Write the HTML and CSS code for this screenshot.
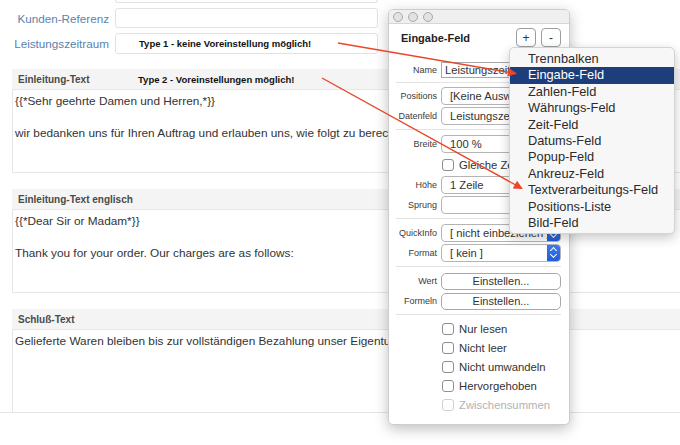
FILE: index.html
```html
<!DOCTYPE html>
<html lang="de">

<head>
  <meta charset="UTF-8">
  <title>Eingabe-Feld</title>
  <link rel="stylesheet" href="styles.css">
</head>

<body>
  <div class="page">
    <div class="form-top">
      <span></span>
      <div class="field stub"></div>
      <label>Kunden-Referenz</label>
      <div class="field"></div>
      <label>Leistungszeitraum</label>
      <div class="field"><b class="note">Type 1 - keine Voreinstellung möglich!</b></div>
    </div>

    <div class="section">
      <div class="sec-head"><span class="sec-title">Einleitung-Text</span><b class="note">Type 2 - Voreinstellungen möglich!</b></div>
      <div class="sec-body">
        <p>{{*Sehr geehrte Damen und Herren,*}}</p>
        <p>&nbsp;</p>
        <p>wir bedanken uns für Ihren Auftrag und erlauben uns, wie folgt zu berechnen:</p>
      </div>
    </div>

    <div class="section">
      <div class="sec-head"><span class="sec-title">Einleitung-Text englisch</span></div>
      <div class="sec-body">
        <p>{{*Dear Sir or Madam*}}</p>
        <p>&nbsp;</p>
        <p>Thank you for your order. Our charges are as follows:</p>
      </div>
    </div>

    <div class="section last">
      <div class="sec-head"><span class="sec-title">Schluß-Text</span></div>
      <div class="sec-body">
        <p>Gelieferte Waren bleiben bis zur vollständigen Bezahlung unser Eigentum.</p>
      </div>
    </div>

    <div class="page-foot"></div>

    <!-- floating inspector window -->
    <div class="win">
      <div class="win-bar"><i></i><i></i><i></i></div>
      <div class="win-head">
        <b>Eingabe-Feld</b>
        <span class="pm"><button>+</button><button>-</button></span>
      </div>

      <div class="prop name-row"><label>Name</label><div class="inp sq">Leistungszeitraum</div></div>
      <hr class="sep first">
      <div class="prop"><label>Positions</label><div class="inp">[Keine Auswahl]</div></div>
      <div class="prop"><label>Datenfeld</label><div class="inp">Leistungszeitraum</div></div>
      <hr class="sep">
      <div class="prop"><label>Breite</label><div class="inp">100 %</div></div>
      <div class="prop check tall"><span class="box"></span>Gleiche Zeilenhöhe</div>
      <div class="prop"><label>Höhe</label><div class="inp">1 Zeile</div></div>
      <div class="prop"><label>Sprung</label><div class="inp"></div></div>
      <hr class="sep">
      <div class="prop"><label>QuickInfo</label><div class="inp pop">[ nicht einbeziehen ]<span class="step"></span></div></div>
      <div class="prop"><label>Format</label><div class="inp pop">[ kein ]<span class="step"></span></div></div>
      <hr class="sep">
      <div class="prop"><label>Wert</label><button class="btn">Einstellen...</button></div>
      <div class="prop"><label>Formeln</label><button class="btn">Einstellen...</button></div>
      <hr class="sep">
      <div class="prop check"><span class="box"></span>Nur lesen</div>
      <div class="prop check"><span class="box"></span>Nicht leer</div>
      <div class="prop check"><span class="box"></span>Nicht umwandeln</div>
      <div class="prop check"><span class="box"></span>Hervorgehoben</div>
      <div class="prop check off"><span class="box"></span>Zwischensummen</div>
    </div>

    <ul class="menu">
      <li>Trennbalken</li>
      <li class="sel">Eingabe-Feld</li>
      <li>Zahlen-Feld</li>
      <li>Währungs-Feld</li>
      <li>Zeit-Feld</li>
      <li>Datums-Feld</li>
      <li>Popup-Feld</li>
      <li>Ankreuz-Feld</li>
      <li>Textverarbeitungs-Feld</li>
      <li>Positions-Liste</li>
      <li>Bild-Feld</li>
    </ul>

    <svg class="arrows" viewBox="0 0 680 445" width="680" height="445">
      <defs>
        <marker id="head" viewBox="0 0 10 10" refX="9" refY="5" markerWidth="11" markerHeight="9" markerUnits="userSpaceOnUse" orient="auto">
          <path d="M0 0L10 5L0 10z" fill="#e8472b" />
        </marker>
      </defs>
      <line x1="338" y1="43" x2="516" y2="73.5" marker-end="url(#head)" />
      <line x1="322" y1="78" x2="522" y2="188.5" marker-end="url(#head)" />
    </svg>
  </div>
</body>

</html>
```

FILE: styles.css
```css
html {
  font-family: "Liberation Sans", Arial, sans-serif;
}

body {
  margin: 0;
  background-color: #fff;
  color: #333;
}

.page {
  position: relative;
  width: 680px;
  height: 445px;
  overflow: hidden;
}

/* top form rows */
.form-top {
  display: grid;
  grid-template-columns: 109px 263px;
  grid-template-rows: 3px 20px 21px;
  column-gap: 6px;
  row-gap: 5px;
  align-items: center;
}

.form-top label {
  text-align: right;
  font-size: 11.7px;
  color: #5a83ae;
}

.field {
  box-sizing: border-box;
  height: 100%;
  border: 1px solid #e2e2e2;
  border-radius: 3px;
  display: flex;
  align-items: center;
}

.field.stub {
  border-top: 0;
  border-radius: 0 0 3px 3px;
}

.note {
  font-size: 9.5px;
  color: #111;
}

.field .note {
  padding-left: 23px;
}

/* text sections */
.section {
  margin: 15px -6px 0 12px;
}

.section + .section {
  margin-top: 16px;
}

.sec-head {
  display: flex;
  align-items: center;
  height: 20px;
  padding-left: 6px;
  background-color: #f3f4f3;
}

.sec-title {
  width: 120px;
  font-size: 10px;
  font-weight: bold;
  color: #4a4a4a;
  white-space: nowrap;
}

.sec-body {
  box-sizing: border-box;
  height: 84px;
  border: 1px solid #e6e6e6;
  padding: 3px 2px;
  font-size: 11.8px;
  line-height: 16px;
  color: #333;
  white-space: nowrap;
}

.sec-body p {
  margin: 0;
}

.last .sec-body {
  height: 83px;
  border-bottom: 0;
}

.page-foot {
  border-top: 1px solid #e4e4e4;
}

/* inspector window */
.win {
  position: absolute;
  left: 388px;
  top: 9px;
  z-index: 2;
  box-sizing: border-box;
  width: 182px;
  height: 416px;
  background-color: #fff;
  border: 1px solid #cdcdcd;
  border-radius: 5px;
  box-shadow: 0 4px 14px rgba(0, 0, 0, 0.25);
  overflow: hidden;
}

.win-bar {
  display: flex;
  gap: 5px;
  align-items: center;
  height: 13px;
  padding-left: 4px;
  background-color: #efefef;
  border-bottom: 1px solid #d6d6d6;
}

.win-bar i {
  box-sizing: border-box;
  width: 10px;
  height: 10px;
  border-radius: 50%;
  border: 1px solid #a9a9a9;
  background-color: #e2e2e2;
}

.win-head {
  display: flex;
  justify-content: space-between;
  align-items: center;
  padding: 4px 8px 0 12px;
  height: 19px;
}

.win-head b {
  font-size: 11px;
  color: #222;
}

.pm {
  display: flex;
  gap: 5px;
}

.pm button {
  box-sizing: border-box;
  width: 20px;
  height: 19px;
  padding: 0;
  background-color: #fff;
  border: 1px solid #9d9d9d;
  border-radius: 4px;
  font-family: inherit;
  font-size: 12px;
  color: #333;
}

.prop {
  display: flex;
  align-items: center;
  height: 20px;
  padding-right: 8px;
}

.prop label {
  width: 48px;
  margin-right: 4px;
  text-align: right;
  font-size: 9px;
  color: #3a3a3a;
}

.name-row {
  margin-top: 13px;
}

.inp {
  position: relative;
  box-sizing: border-box;
  width: 120px;
  height: 18px;
  padding-left: 8px;
  border: 1px solid #b4b4b4;
  border-radius: 4px;
  background-color: #fff;
  font-size: 11.2px;
  line-height: 16px;
  color: #333;
  white-space: nowrap;
  overflow: hidden;
}

.inp.sq {
  height: 16px;
  line-height: 14px;
  padding-left: 3px;
  border-radius: 0;
  border-color: #a9a9a9;
}

.inp.pop {
  padding-right: 16px;
}

.step {
  position: absolute;
  top: -1px;
  right: -1px;
  width: 14px;
  height: 18px;
  border-radius: 0 4px 4px 0;
  background: linear-gradient(#3f7df0, #1f5ad6);
}

.step::before,
.step::after {
  content: "";
  position: absolute;
  left: 4px;
  width: 4px;
  height: 4px;
  border: solid #fff;
  border-width: 1.5px 1.5px 0 0;
}

.step::before {
  top: 4px;
  transform: rotate(-45deg);
}

.step::after {
  top: 8px;
  transform: rotate(135deg);
}

.btn {
  box-sizing: border-box;
  width: 120px;
  height: 17px;
  padding: 0;
  background-color: #fff;
  border: 1px solid #a9a9a9;
  border-radius: 5px;
  font-family: inherit;
  font-size: 11px;
  color: #333;
}

.sep {
  height: 1px;
  margin: 3px 8px 4px 7px;
  border: 0;
  background-color: #e3e3e3;
}

.sep.first {
  margin-top: 2px;
  margin-bottom: 3px;
}

.check {
  height: 19px;
  padding-left: 53px;
  font-size: 11.3px;
  color: #333;
  white-space: nowrap;
}

.check.tall {
  height: 21px;
}

.box {
  box-sizing: border-box;
  width: 12px;
  height: 12px;
  margin-right: 5px;
  border: 1px solid #8f8f8f;
  border-radius: 3px;
  background-color: #fff;
  flex-shrink: 0;
}

.check.off {
  color: #b2b2b2;
}

.check.off .box {
  border-color: #d0d0d0;
}

/* popup menu */
.menu {
  position: absolute;
  left: 509px;
  top: 47px;
  z-index: 3;
  box-sizing: border-box;
  width: 166px;
  margin: 0;
  padding: 3px 0 2px;
  list-style: none;
  background-color: #f7f7f7;
  border: 1px solid #d3d3d3;
  border-radius: 5px;
  box-shadow: 0 4px 12px rgba(0, 0, 0, 0.22);
}

.menu li {
  height: 16.4px;
  padding-left: 18px;
  font-size: 12.8px;
  line-height: 16.4px;
  color: #2b2b2b;
}

.menu li.sel {
  background-color: #1d3d7b;
  color: #fff;
}

.arrows {
  position: absolute;
  left: 0;
  top: 0;
  z-index: 4;
  pointer-events: none;
}

.arrows line {
  stroke: #e8472b;
  stroke-width: 1.4;
}
```
